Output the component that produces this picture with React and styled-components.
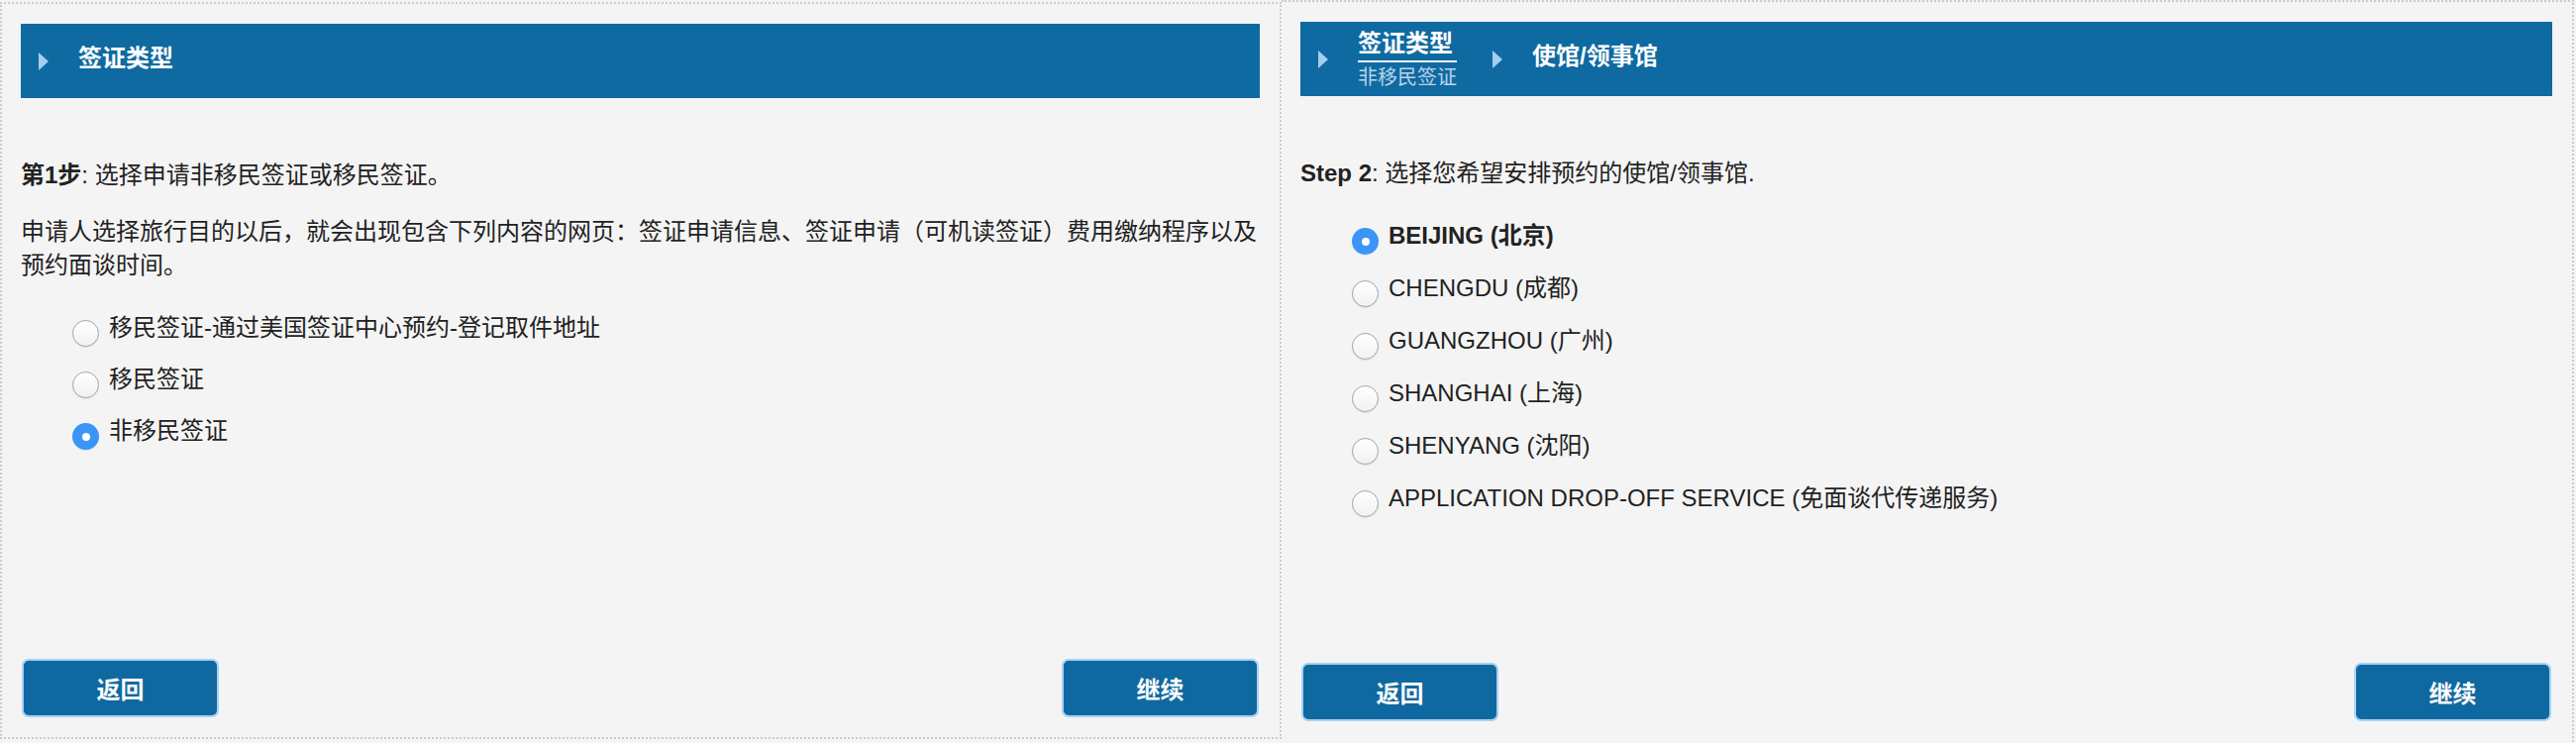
import React, { useState } from 'react';
import styled, { createGlobalStyle } from 'styled-components';

const VISA_TYPES = [
  '移民签证-通过美国签证中心预约-登记取件地址',
  '移民签证',
  '非移民签证',
];

const POSTS = [
  'BEIJING (北京)',
  'CHENGDU (成都)',
  'GUANGZHOU (广州)',
  'SHANGHAI (上海)',
  'SHENYANG (沈阳)',
  'APPLICATION DROP-OFF SERVICE (免面谈代传递服务)',
];

function Options({ name, options, value, onChange, top, gap, boldChecked }) {
  return (
    <OptionList $top={top} $gap={gap}>
      {options.map((label) => (
        <Option key={label}>
          <Radio
            type="radio"
            name={name}
            checked={value === label}
            onChange={() => onChange(label)}
          />
          <OptionText $bold={boldChecked && value === label}>{label}</OptionText>
        </Option>
      ))}
    </OptionList>
  );
}

function App() {
  const [visaType, setVisaType] = useState('非移民签证');
  const [post, setPost] = useState('BEIJING (北京)');

  return (
    <Page>
      <GlobalStyle />
      <Panel $width={1294} $height={744} $top={2}>
        <StepBar>
          <Arrow />
          <CurrentStep>签证类型</CurrentStep>
        </StepBar>
        <Body $top={61}>
          <Text>
            <strong>第1步</strong>: 选择申请非移民签证或移民签证。
          </Text>
          <Text $top={23}>
            申请人选择旅行目的以后，就会出现包含下列内容的网页：签证申请信息、签证申请（可机读签证）费用缴纳程序以及预约面谈时间。
          </Text>
          <Options
            name="visa"
            options={VISA_TYPES}
            value={visaType}
            onChange={setVisaType}
            top={29}
            gap={18}
          />
        </Body>
        <Footer>
          <Button>返回</Button>
          <Button>继续</Button>
        </Footer>
      </Panel>

      <Panel $width={1305} $height={752} $top={0} $noLeft $bottom={22}>
        <StepBar>
          <Arrow />
          <DoneStep>
            <DoneTitle>签证类型</DoneTitle>
            <DoneValue>非移民签证</DoneValue>
          </DoneStep>
          <Arrow />
          <CurrentStep>使馆/领事馆</CurrentStep>
        </StepBar>
        <Body $top={61}>
          <Text>
            <strong>Step 2</strong>: 选择您希望安排预约的使馆/领事馆.
          </Text>
          <Options
            name="post"
            options={POSTS}
            value={post}
            onChange={setPost}
            top={29}
            gap={19}
            boldChecked
          />
        </Body>
        <Footer>
          <Button>返回</Button>
          <Button>继续</Button>
        </Footer>
      </Panel>
    </Page>
  );
}

export default App;

const GlobalStyle = createGlobalStyle`
  html, body {
    margin: 0;
    background: #f4f4f4;
  }
  body {
    font-family: "Liberation Sans", "Noto Sans CJK SC", sans-serif;
    color: #222222;
  }
`;

const Page = styled.div`
  display: flex;
  align-items: flex-start;
  width: 2601px;
  height: 750px;
  overflow: hidden;
`;

const Panel = styled.section`
  box-sizing: border-box;
  width: ${(p) => p.$width}px;
  height: ${(p) => p.$height}px;
  margin-top: ${(p) => p.$top}px;
  border: 2px dotted #cccccc;
  ${(p) => p.$noLeft && 'border-left: none;'}
  padding: 20px 20px ${(p) => p.$bottom || 20}px 19px;
  display: flex;
  flex-direction: column;
`;

const StepBar = styled.div`
  height: 75px;
  background: #0f6aa1;
  color: #fff;
  display: flex;
  align-items: center;
  padding-left: 18px;
`;

const Arrow = styled.span`
  width: 0;
  height: 0;
  border-left: 10px solid #a5cdef;
  border-top: 9px solid transparent;
  border-bottom: 9px solid transparent;
  margin-right: 30px;
`;

const CurrentStep = styled.div`
  font-size: 24px;
  font-weight: bold;
  line-height: 28px;
  margin-bottom: 6px;
`;

const DoneStep = styled.div`
  display: flex;
  flex-direction: column;
  margin-right: 36px;
`;

const DoneTitle = styled.div`
  font-size: 24px;
  font-weight: bold;
  line-height: 28px;
  padding-bottom: 3px;
  border-bottom: 2px solid #ffffff;
`;

const DoneValue = styled.div`
  font-size: 20px;
  line-height: 24px;
  margin-top: 3px;
  color: #b7d3ea;
`;

const Body = styled.div`
  margin-top: ${(p) => p.$top}px;
`;

const Text = styled.p`
  margin: ${(p) => p.$top || 0}px 0 0;
  max-width: 1248px;
  font-size: 24px;
  line-height: 34px;

  strong {
    font-weight: bold;
  }
`;

const OptionList = styled.div`
  display: flex;
  flex-direction: column;
  gap: ${(p) => p.$gap}px;
  margin-top: ${(p) => p.$top}px;
  padding-left: 52px;
`;

const Option = styled.label`
  display: flex;
  align-items: flex-start;
  gap: 10px;
  height: 34px;
  cursor: pointer;
`;

const Radio = styled.input`
  appearance: none;
  box-sizing: border-box;
  width: 27px;
  height: 27px;
  margin: 9px 0 0;
  border-radius: 50%;
  border: 1px solid #a3a3a3;
  background: linear-gradient(#ffffff, #f1f1f1);
  box-shadow: 0 1px 1px rgba(0, 0, 0, 0.08);
  position: relative;
  flex-shrink: 0;

  &:checked {
    border: none;
    background: #3b95f7;
  }

  &:checked::after {
    content: '';
    position: absolute;
    left: 50%;
    top: 50%;
    width: 8px;
    height: 8px;
    margin: -4px 0 0 -4px;
    border-radius: 50%;
    background: #fff;
  }
`;

const OptionText = styled.span`
  font-size: 24px;
  line-height: 34px;
  font-weight: ${(p) => (p.$bold ? 'bold' : 'normal')};
`;

const Footer = styled.div`
  margin-top: auto;
  display: flex;
  justify-content: space-between;
  padding: 0 1px;
`;

const Button = styled.button`
  box-sizing: border-box;
  width: 199px;
  height: 59px;
  background: #0f69a0;
  border: 2px solid #a8d1f4;
  border-radius: 7px;
  color: #fff;
  font-family: "Liberation Sans", "Noto Sans CJK SC", sans-serif;
  font-size: 24px;
  font-weight: bold;
  cursor: pointer;
`;
